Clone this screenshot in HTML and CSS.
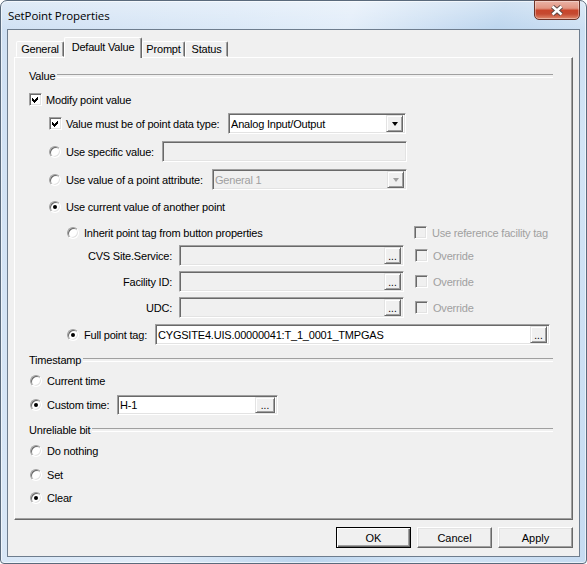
FILE: index.html
```html
<!DOCTYPE html>
<html>
  <head>
    <meta charset="utf-8" />
    <title>SetPoint Properties</title>
    <link rel="stylesheet" href="styles.css">
  </head>
  <body>
    <div class="window">
      <div class="titlebar">
        <span class="title">SetPoint Properties</span>
        <div class="close">
          <svg width="14" height="11" viewBox="0 0 14 11">
            <path d="M2.5 1.5 L11.5 9.5 M11.5 1.5 L2.5 9.5" stroke="#5a4844" stroke-width="4.4" />
            <path d="M2.5 1.5 L11.5 9.5 M11.5 1.5 L2.5 9.5" stroke="#fff" stroke-width="2.4" />
          </svg>
        </div>
      </div>

      <div class="client">
        <div class="tabs">
          <div class="tab w-general">General</div>
          <div class="tab active w-default">Default Value</div>
          <div class="tab w-prompt">Prompt</div>
          <div class="tab w-status">Status</div>
        </div>

        <div class="panel">
          <!-- value -->
          <div class="row group">Value</div>
          <div class="row">
            <span class="chk"><svg width="11" height="11" viewBox="1 1 11 11"><polygon points="3,5 5,7 9,3 9,6 5,10 3,8" /></svg></span>
            <span>Modify point value</span>
          </div>
          <div class="row l1">
            <span class="chk"><svg width="11" height="11" viewBox="1 1 11 11"><polygon points="3,5 5,7 9,3 9,6 5,10 3,8" /></svg></span>
            <span class="lbl w-must">Value must be of point data type:</span>
            <div class="field w-combo">
              <span class="val">Analog Input/Output</span>
              <span class="drop"></span>
            </div>
          </div>
          <div class="row l1">
            <span class="rad"></span>
            <span class="lbl w-specific">Use specific value:</span>
            <div class="field off w-specific-field"></div>
          </div>
          <div class="row l1">
            <span class="rad"></span>
            <span class="lbl w-attr">Use value of a point attribute:</span>
            <div class="field off w-attr-field">
              <span class="val muted">General 1</span>
              <span class="drop off"></span>
            </div>
          </div>
          <div class="row l1">
            <span class="rad on"></span>
            <span>Use current value of another point</span>
          </div>
          <div class="row l2">
            <span class="rad"></span>
            <span class="lbl w-inherit">Inherit point tag from button properties</span>
            <span class="chk off"></span>
            <span class="muted">Use reference facility tag</span>
          </div>
          <div class="row l2">
            <span class="lbl right w-tagname">CVS Site.Service:</span>
            <div class="field off w-tag"><span class="val"></span><span class="more">...</span></div>
            <span class="chk off"></span>
            <span class="muted">Override</span>
          </div>
          <div class="row l2">
            <span class="lbl right w-tagname">Facility ID:</span>
            <div class="field off w-tag"><span class="val"></span><span class="more">...</span></div>
            <span class="chk off"></span>
            <span class="muted">Override</span>
          </div>
          <div class="row l2">
            <span class="lbl right w-tagname">UDC:</span>
            <div class="field off w-tag"><span class="val"></span><span class="more">...</span></div>
            <span class="chk off"></span>
            <span class="muted">Override</span>
          </div>
          <div class="row l2">
            <span class="rad on"></span>
            <span class="lbl w-full">Full point tag:</span>
            <div class="field w-full-field"><span class="val">CYGSITE4.UIS.00000041:T_1_0001_TMPGAS</span><span class="more">...</span></div>
          </div>

          <!-- timestamp -->
          <div class="row group">Timestamp</div>
          <div class="row l0">
            <span class="rad"></span>
            <span>Current time</span>
          </div>
          <div class="row l0">
            <span class="rad on"></span>
            <span class="lbl w-custom">Custom time:</span>
            <div class="field short w-time"><span class="val">H-1</span><span class="more">...</span></div>
          </div>

          <!-- unreliable bit -->
          <div class="row group">Unreliable bit</div>
          <div class="row l0">
            <span class="rad"></span>
            <span>Do nothing</span>
          </div>
          <div class="row l0">
            <span class="rad"></span>
            <span>Set</span>
          </div>
          <div class="row l0">
            <span class="rad on"></span>
            <span>Clear</span>
          </div>
        </div>

        <div class="buttons">
          <button class="btn default">OK</button>
          <button class="btn">Cancel</button>
          <button class="btn">Apply</button>
        </div>
      </div>
    </div>
  </body>
</html>
```

FILE: styles.css
```css
* {
  margin: 0;
  padding: 0;
  box-sizing: border-box;
}
body {
  background: #fff;
  color: #000;
  font-family: "Liberation Sans", Arial, sans-serif;
  font-size: 11px;
  letter-spacing: -0.2px;
}

/* window frame */
.window {
  width: 587px;
  height: 564px;
  display: flex;
  flex-direction: column;
  padding: 0 6px 6px;
  border: 1px solid #5a6a7c;
  border-radius: 7px 7px 4px 4px;
  background:
    linear-gradient(to bottom, rgba(255, 255, 255, 0.35), rgba(255, 255, 255, 0) 30px),
    linear-gradient(110deg, #cfe0f3 0%, #dae8f7 30%, #e2edf9 45%, #bcd5ee 64%, #d3e4f5 80%, #c6dbf1 100%);
  box-shadow: inset 0 0 0 1px rgba(255, 255, 255, 0.6);
}
.titlebar {
  height: 28px;
  display: flex;
  justify-content: space-between;
  padding-left: 1px;
}
.title {
  align-self: center;
  font-family: "Open Sans", "Noto Sans", sans-serif;
  font-size: 11.5px;
  letter-spacing: -0.1px;
}
.close {
  width: 46px;
  height: 20px;
  margin-top: -1px;
  display: flex;
  align-items: center;
  justify-content: center;
  border: 1px solid #6b3328;
  border-radius: 0 0 5px 5px;
  background: linear-gradient(#eab3a6 0%, #e29582 40%, #c8452b 52%, #c54a31 72%, #e08a6e 100%);
  box-shadow: inset 0 0 0 1px rgba(255, 255, 255, 0.35);
}

.client {
  flex: 1;
  display: flex;
  flex-direction: column;
  padding: 7px 6px 0;
  border: 1px solid #6e7d8e;
  background: #f0f0f0;
}

/* tabs */
.tabs {
  height: 20px;
  display: flex;
  align-items: flex-end;
  padding-left: 2px;
  position: relative;
  z-index: 1;
}
.tab {
  height: 16px;
  display: flex;
  align-items: center;
  justify-content: center;
  border: 1px solid;
  border-color: #fff #696969 transparent #fff;
  border-radius: 2px 2px 0 0;
  box-shadow: inset -1px 0 #a0a0a0;
  background: #f0f0f0;
}
.tab.active {
  height: 21px;
  margin-bottom: -1px;
  padding-bottom: 3px;
  border-bottom: 0;
}
.w-general { width: 48px; }
.w-default { width: 78px; }
.w-prompt { width: 43px; }
.w-status { width: 43px; }

/* page */
.panel {
  height: 463px;
  display: grid;
  grid-template-rows: 24px 24px 28px 28px 27px 26px 23px 26px 26px 27px 25px 21px 24px 25px 21px 24px 23px 21px;
  align-content: start;
  padding: 7px 19px 0 14px;
  border: 1px solid;
  border-color: #fff #696969 #696969 #fff;
  box-shadow: inset -1px -1px #a0a0a0;
}
.row {
  height: 21px;
  display: flex;
  align-items: center;
  white-space: nowrap;
}
.l0 { padding-left: 1px; }
.l1 { padding-left: 20px; }
.l2 { padding-left: 38px; }

.group::after {
  content: "";
  flex: 1;
  height: 2px;
  margin: 1px 0 0 2px;
  border-top: 1px solid #a0a0a0;
  border-bottom: 1px solid #fff;
}

.lbl { flex: none; }
.lbl.right { text-align: right; margin-right: 7px; }
.w-must { width: 162px; }
.w-specific { width: 96px; }
.w-attr { width: 146px; }
.w-inherit { width: 330px; }
.w-tagname { width: 105px; }
.w-full { width: 71px; }
.w-custom { width: 70px; }

.muted { color: #a0a0a0; }

/* check boxes and radios */
.chk {
  flex: none;
  width: 13px;
  height: 13px;
  margin-right: 4px;
  border: 1px solid;
  border-color: #a0a0a0 #fff #fff #a0a0a0;
  box-shadow: inset 1px 1px #696969, inset -1px -1px #e3e3e3;
  background: #fff;
}
.chk svg {
  display: block;
  shape-rendering: crispEdges;
}
.chk.off {
  margin-right: 5px;
  background: #f0f0f0;
}
.rad {
  flex: none;
  width: 12px;
  height: 12px;
  margin-right: 5px;
  display: flex;
  align-items: center;
  justify-content: center;
  border: 1px solid;
  border-color: #a0a0a0 #fff #fff #a0a0a0;
  border-radius: 50%;
  box-shadow: inset 1px 1px #696969, inset -1px -1px #e3e3e3;
  background: #fff;
}
.rad.on::after {
  content: "";
  width: 4px;
  height: 4px;
  border-radius: 50%;
  background: #000;
}

/* edit fields */
.field {
  flex: none;
  height: 21px;
  display: flex;
  align-items: center;
  padding: 2px;
  border: 1px solid;
  border-color: #a0a0a0 #fff #fff #a0a0a0;
  box-shadow: inset 1px 1px #696969, inset -1px -1px #e3e3e3;
  background: #fff;
}
.field.off { background: #f0f0f0; }
.field.short { height: 20px; }
.field .val {
  flex: 1;
  overflow: hidden;
}
.w-combo { width: 178px; }
.w-specific-field { width: 245px; }
.w-attr-field { width: 195px; }
.w-tag { width: 225px; margin-right: 11px; }
.w-full-field { width: 395px; }
.w-time { width: 161px; }

.drop,
.more {
  flex: none;
  width: 17px;
  height: 17px;
  display: flex;
  align-items: center;
  justify-content: center;
  border: 1px solid;
  border-color: #e3e3e3 #696969 #696969 #e3e3e3;
  box-shadow: inset 1px 1px #fff, inset -1px -1px #a0a0a0;
  background: #f0f0f0;
}
.drop::after {
  content: "";
  border-style: solid;
  border-width: 4px 3.5px 0;
  border-color: #000 transparent transparent;
}
.drop.off::after { border-top-color: #a0a0a0; }
.more {
  align-items: flex-end;
  padding-bottom: 2px;
  font-size: 10px;
  letter-spacing: 0;
  line-height: 8px;
}
.short .more { width: 20px; height: 16px; }

/* dialog buttons */
.buttons {
  display: flex;
  justify-content: flex-end;
  gap: 6px;
  margin-top: 7px;
}
.btn {
  width: 75px;
  height: 21px;
  font: inherit;
  color: #000;
  border: 1px solid;
  border-color: #fff #696969 #696969 #fff;
  box-shadow: inset -1px -1px #a0a0a0, inset 1px 1px #e3e3e3;
  background: #f0f0f0;
}
.btn.default {
  border-color: #000;
  box-shadow: inset 1px 1px #fff, inset -1px -1px #696969, inset -2px -2px #a0a0a0;
}
```
